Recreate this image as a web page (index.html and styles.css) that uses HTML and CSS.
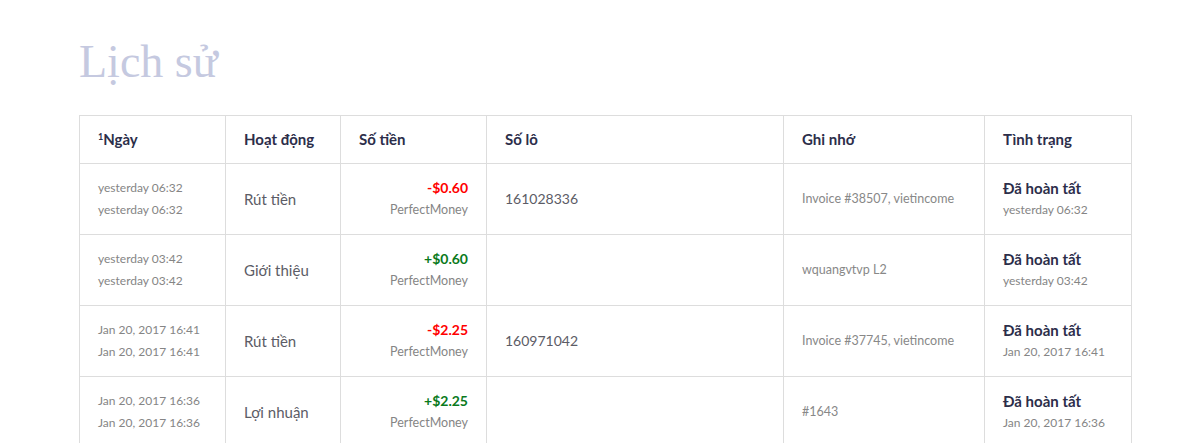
FILE: index.html
```html
<!DOCTYPE html>
<html lang="vi">
<head>
    <meta charset="UTF-8">
    <meta name="viewport" content="width=device-width, initial-scale=1.0">
    <title>Lịch sử</title>
    <link rel="stylesheet" href="styles.css">
</head>
<body>
    <div class="page">
        <h1 class="title">Lịch sử</h1>

        <table class="history">
            <colgroup>
                <col class="c-date">
                <col class="c-type">
                <col class="c-amount">
                <col class="c-batch">
                <col class="c-memo">
                <col class="c-status">
            </colgroup>
            <thead>
                <tr>
                    <th><sup>1</sup>Ngày</th>
                    <th>Hoạt động</th>
                    <th>Số tiền</th>
                    <th>Số lô</th>
                    <th>Ghi nhớ</th>
                    <th>Tình trạng</th>
                </tr>
            </thead>
            <tbody>
                <tr>
                    <td class="date"><span>yesterday 06:32</span><span>yesterday 06:32</span></td>
                    <td class="type">Rút tiền</td>
                    <td class="amount"><span class="minus">-$0.60</span><span class="via">PerfectMoney</span></td>
                    <td class="batch">161028336</td>
                    <td class="memo">Invoice #38507, vietincome</td>
                    <td class="status"><b>Đã hoàn tất</b><span>yesterday 06:32</span></td>
                </tr>
                <tr>
                    <td class="date"><span>yesterday 03:42</span><span>yesterday 03:42</span></td>
                    <td class="type">Giới thiệu</td>
                    <td class="amount"><span class="plus">+$0.60</span><span class="via">PerfectMoney</span></td>
                    <td class="batch"></td>
                    <td class="memo">wquangvtvp L2</td>
                    <td class="status"><b>Đã hoàn tất</b><span>yesterday 03:42</span></td>
                </tr>
                <tr>
                    <td class="date"><span>Jan 20, 2017 16:41</span><span>Jan 20, 2017 16:41</span></td>
                    <td class="type">Rút tiền</td>
                    <td class="amount"><span class="minus">-$2.25</span><span class="via">PerfectMoney</span></td>
                    <td class="batch">160971042</td>
                    <td class="memo">Invoice #37745, vietincome</td>
                    <td class="status"><b>Đã hoàn tất</b><span>Jan 20, 2017 16:41</span></td>
                </tr>
                <tr>
                    <td class="date"><span>Jan 20, 2017 16:36</span><span>Jan 20, 2017 16:36</span></td>
                    <td class="type">Lợi nhuận</td>
                    <td class="amount"><span class="plus">+$2.25</span><span class="via">PerfectMoney</span></td>
                    <td class="batch"></td>
                    <td class="memo">#1643</td>
                    <td class="status"><b>Đã hoàn tất</b><span>Jan 20, 2017 16:36</span></td>
                </tr>
            </tbody>
        </table>
    </div>
</body>
</html>
```

FILE: styles.css
```css
* {
    margin: 0;
    padding: 0;
    box-sizing: border-box;
}
body {
    font-family: Lato, "Open Sans", sans-serif;
    background: #fff;
    color: #555;
}
.page {
    padding: 34px 51px 0 79px;
}
.title {
    font-family: "Liberation Serif", serif;
    font-weight: normal;
    font-size: 46px;
    line-height: 56px;
    color: #c5c9e0;
    margin-bottom: 25px;
}
.history {
    width: 1052px;
    border-collapse: collapse;
    table-layout: fixed;
}
.c-date { width: 146px; }
.c-type { width: 115px; }
.c-amount { width: 146px; }
.c-batch { width: 297px; }
.c-memo { width: 201px; }
.c-status { width: 147px; }
.history th,
.history td {
    border: 1px solid #ddd;
    padding: 13px 18px;
    line-height: 22px;
    text-align: left;
    vertical-align: middle;
    white-space: nowrap;
}
.history td span,
.history td b {
    display: block;
    line-height: 22px;
}
.history th {
    font-weight: bold;
    font-size: 15px;
    color: #2c2e4a;
    padding-top: 12px;
}
.history th sup {
    font-size: 9px;
    vertical-align: 5px;
    line-height: 0;
}
.date {
    font-size: 12px;
    color: #858585;
}
.type {
    font-size: 15px;
    color: #5c5c66;
}
.history td.amount {
    text-align: right;
}
.amount .minus,
.amount .plus {
    font-size: 14px;
    font-weight: bold;
}
.amount .minus { color: #f00; }
.amount .plus { color: #0a7a1c; }
.amount .via {
    font-size: 12.5px;
    color: #858585;
}
.batch {
    font-size: 14px;
    color: #5c5c66;
}
.memo {
    font-size: 12.5px;
    color: #888;
}
.status b {
    font-size: 15px;
    color: #2c2e4a;
}
.status span {
    font-size: 12px;
    color: #858585;
}
```
